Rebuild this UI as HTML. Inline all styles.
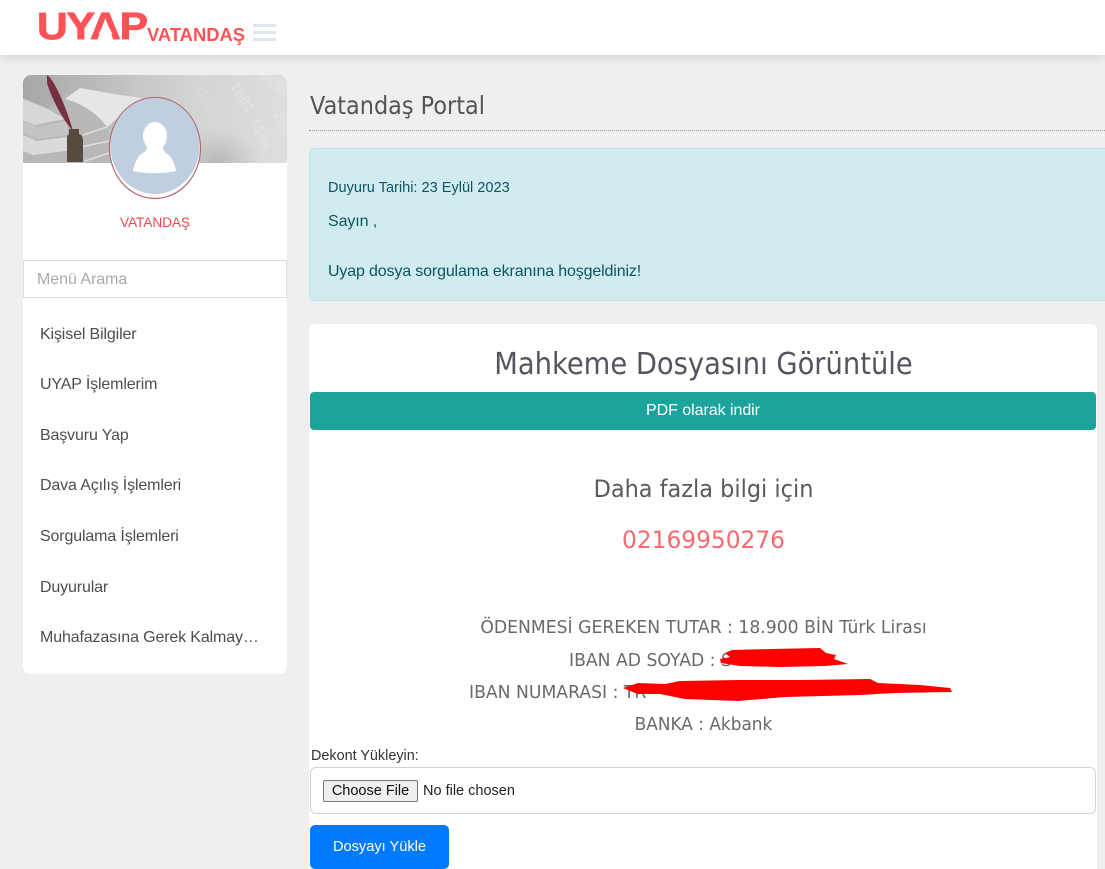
<!DOCTYPE html>
<html lang="tr"><head><meta charset="utf-8"><title>Vatandaş Portal</title>
<style>
html,body{margin:0;padding:0;width:1105px;height:869px;overflow:hidden}
body{background:#efefef;position:relative;font-family:"Liberation Sans",Arial,sans-serif;color:#333}
#wrap{position:absolute;left:0;top:0;width:1105px;height:869px;overflow:hidden}
.a{position:absolute;white-space:nowrap}
.light{font-family:"DejaVu Sans",sans-serif;font-weight:400;color:#6a6a6a;transform-origin:center top}
#top{left:0;top:0;width:1105px;height:55px;background:#fff;box-shadow:0 2px 10px rgba(0,0,0,.12)}
.bar{left:253px;width:23px;height:2.5px;background:#dfe6f0}
#side{left:23px;top:75px;width:264px;height:599px;background:#fff;border-radius:8px;overflow:hidden}
.mi{left:40px;font-size:16px;color:#4d4d4d;line-height:20px;letter-spacing:-.14px}
.c{left:310px;width:787px;text-align:center}
</style></head><body><div id="wrap">
<div class="a" id="top"></div>
<div class="a" style="left:37px;top:4px;font-size:38px;font-weight:700;color:#ff5257;-webkit-text-stroke:.8px #ff5257;line-height:46px;letter-spacing:-1px;transform:scaleX(1.12);transform-origin:left top">UYAP</div>
<svg class="a" style="left:90px;top:20px" width="32" height="20" viewBox="90 20 32 20"><polygon points="102.5,26.5 108.5,26.5 112.5,34 98.5,34" fill="#fff"/></svg>
<div class="a" style="left:147px;top:24px;font-size:18.4px;font-weight:700;color:#ff5257;line-height:22px">VATANDAŞ</div>
<div class="a bar" style="top:24px"></div><div class="a bar" style="top:31px"></div><div class="a bar" style="top:38px"></div>

<div class="a" id="side">
<svg width="264" height="88" viewBox="0 0 264 88" style="position:absolute;left:0;top:0">
<defs><linearGradient id="g" x1="0" x2="1" y1="0" y2="0"><stop offset="0" stop-color="#a6a6a6"/><stop offset=".45" stop-color="#c8c8c8"/><stop offset=".65" stop-color="#d4d4d4"/><stop offset="1" stop-color="#dedede"/></linearGradient>
<radialGradient id="s" cx=".5" cy=".5" r=".5"><stop offset="0" stop-color="#a0a0a0" stop-opacity=".55"/><stop offset="1" stop-color="#a0a0a0" stop-opacity="0"/></radialGradient></defs>
<rect width="264" height="88" fill="url(#g)"/>
<ellipse cx="195" cy="88" rx="42" ry="34" fill="url(#s)"/>
<path d="M0 23L25 33 42 20 57 13 97 20 120 23 95 42 84 52 87 88H0Z" fill="#b8b8b8"/>
<path d="M42 24L57 13 97 20 120 23 96 42 84 52C74 38 58 28 42 24Z" fill="#e6e6e6"/>
<path d="M0 24L25 34 42 44 12 50 0 45Z" fill="#d8d8d8"/>
<path d="M0 45L14 52 44 46 45 60 14 64 0 58Z" fill="#c4c4c4"/>
<path d="M0 60L14 66 44 62 50 75 10 80 0 76Z" fill="#dadada"/>
<path d="M60 60L84 52M58 72L86 66M62 86L86 78" stroke="#dedede" stroke-width="1.5" fill="none"/>
<path d="M24 0C32 5 44 35 50 56C39 44 28 22 24 8Z" fill="#77303f"/>
<path d="M46 54h10v5c3 1 4 3 4 7v21H44V66c0-4 0-6 2-7Z" fill="#574a3e"/>
<g font-family="Liberation Mono,monospace" font-size="14" fill="#ececec" opacity=".55">
<text x="236" y="2" transform="rotate(35 236 2)">0101</text>
<text x="207" y="10" transform="rotate(58 207 10)">1001</text>
<text x="228" y="44" transform="rotate(70 228 44)">1100</text>
<text x="170" y="10" transform="rotate(62 170 10)" opacity=".5">01101</text>
<text x="250" y="38" transform="rotate(72 250 38)">110</text>
</g>
</svg>
<div class="a" style="left:0;top:137.5px;width:264px;text-align:center;font-size:13.7px;color:#f0474f;line-height:20px;letter-spacing:-.1px">VATANDAŞ</div>
</div>
<svg class="a" style="left:108px;top:96px" width="94" height="104" viewBox="0 0 94 104">
<ellipse cx="47" cy="52" rx="45.5" ry="50.5" fill="#fff" stroke="#b5666c" stroke-width="1.2"/>
<ellipse cx="47" cy="50" rx="44.5" ry="48" fill="#bfcfe0"/>
<ellipse cx="47" cy="40" rx="12" ry="14" fill="#fff"/>
<path d="M39 50h16c0 4 1 5 3 7 6 3 9 12 10 18-14 3-29 3-43 0 1-6 4-15 10-18 2-2 4-3 4-7Z" fill="#fff"/>
</svg>
<div class="a" style="left:23px;top:260px;width:264px;height:38px;box-sizing:border-box;background:#fff;border:1px solid #dcdcdc;padding-left:13px;font-size:16px;line-height:37px;color:#aaa;letter-spacing:-.05px">Menü Arama</div>
<div class="a mi" style="top:325px">Kişisel Bilgiler</div>
<div class="a mi" style="top:375px">UYAP İşlemlerim</div>
<div class="a mi" style="top:426px">Başvuru Yap</div>
<div class="a mi" style="top:476px">Dava Açılış İşlemleri</div>
<div class="a mi" style="top:527px">Sorgulama İşlemleri</div>
<div class="a mi" style="top:578px">Duyurular</div>
<div class="a mi" style="top:628px">Muhafazasına Gerek Kalmay…</div>

<div class="a light" style="left:310px;top:92px;font-size:25px;line-height:28px;transform-origin:left top;transform:scaleX(.895);color:#555">Vatandaş Portal</div>
<div class="a" style="left:309px;top:130px;width:796px;border-top:1px dotted #9a97a5"></div>
<div class="a" style="left:309px;top:148px;width:810px;height:153px;box-sizing:border-box;background:#d1ecf1;border:1px solid #bee5eb;border-radius:5px"></div>
<div class="a" style="left:328px;top:179px;font-size:14.55px;line-height:18px;color:#0c5460">Duyuru Tarihi: 23 Eylül 2023</div>
<div class="a" style="left:328px;top:212px;font-size:16px;line-height:20px;color:#0c5460;letter-spacing:-.1px">Sayın ,</div>
<div class="a" style="left:328px;top:262px;font-size:16px;line-height:20px;color:#0c5460;letter-spacing:-.15px">Uyap dosya sorgulama ekranına hoşgeldiniz!</div>

<div class="a" style="left:309px;top:324px;width:788px;height:545px;background:#fff;border-radius:6px 6px 0 0"></div>
<div class="a c light" style="top:347px;font-size:30px;line-height:36px;transform:scaleX(.912);color:#55555f">Mahkeme Dosyasını Görüntüle</div>
<div class="a" style="left:310px;top:392px;width:786px;height:38px;background:#1ba39c;border-radius:4px;color:#fff;text-align:center;font-size:16px;line-height:38px;letter-spacing:-.05px">PDF olarak indir</div>
<div class="a c light" style="top:473px;font-size:24px;line-height:32px;transform:scaleX(.934);color:#5a5a5a">Daha fazla bilgi için</div>
<div class="a c light" style="top:524px;font-size:24px;line-height:32px;transform:scaleX(.97);color:#f76a70">02169950276</div>
<div class="a c light" style="top:616px;font-size:18px;line-height:24px;transform:scaleX(.956)">ÖDENMESİ GEREKEN TUTAR : 18.900 BİN Türk Lirası</div>
<div class="a light" style="left:569px;top:649px;font-size:18px;line-height:24px;transform-origin:left top;transform:scaleX(.956)">IBAN AD SOYAD : S</div>
<div class="a light" style="left:469px;top:681px;font-size:18px;line-height:24px;transform-origin:left top;transform:scaleX(.956)">IBAN NUMARASI : TR</div>
<div class="a c light" style="top:713px;font-size:18px;line-height:24px;transform:scaleX(.94)">BANKA : Akbank</div>
<svg class="a" style="left:620px;top:645px" width="340" height="60" viewBox="0 0 340 60">
<path d="M112 5L150 4 200 3 206 8 216 10 214 14 228 19 205 21 160 22 120 21 101 18 100 14 110 12 105 8Z" fill="#f00"/>
<path d="M3 43L18 38 45 39 60 36 120 35 180 35 250 34 258 38 300 40 330 43 332 47 275 48 240 50 165 52 118 56 65 54 40 49 18 49 10 46Z" fill="#f00"/>
</svg>
<div class="a" style="left:311px;top:747px;font-size:14.4px;line-height:18px;color:#333">Dekont Yükleyin:</div>
<div class="a" style="left:310px;top:767px;width:786px;height:47px;box-sizing:border-box;background:#fff;border:1px solid #ced4da;border-radius:6px"></div>
<div class="a" style="left:323px;top:780px;width:93px;height:20px;background:#efefef;border:1px solid #767676;border-radius:2px;text-align:center;font-size:14.5px;line-height:21px;color:#111">Choose File</div>
<div class="a" style="left:423px;top:781px;font-size:14.5px;line-height:21px;color:#222">No file chosen</div>
<div class="a" style="left:310px;top:825px;width:139px;height:44px;background:#007bff;border-radius:5px;color:#fff;text-align:center;font-size:14.6px;line-height:44px">Dosyayı Yükle</div>
</div></body></html>
